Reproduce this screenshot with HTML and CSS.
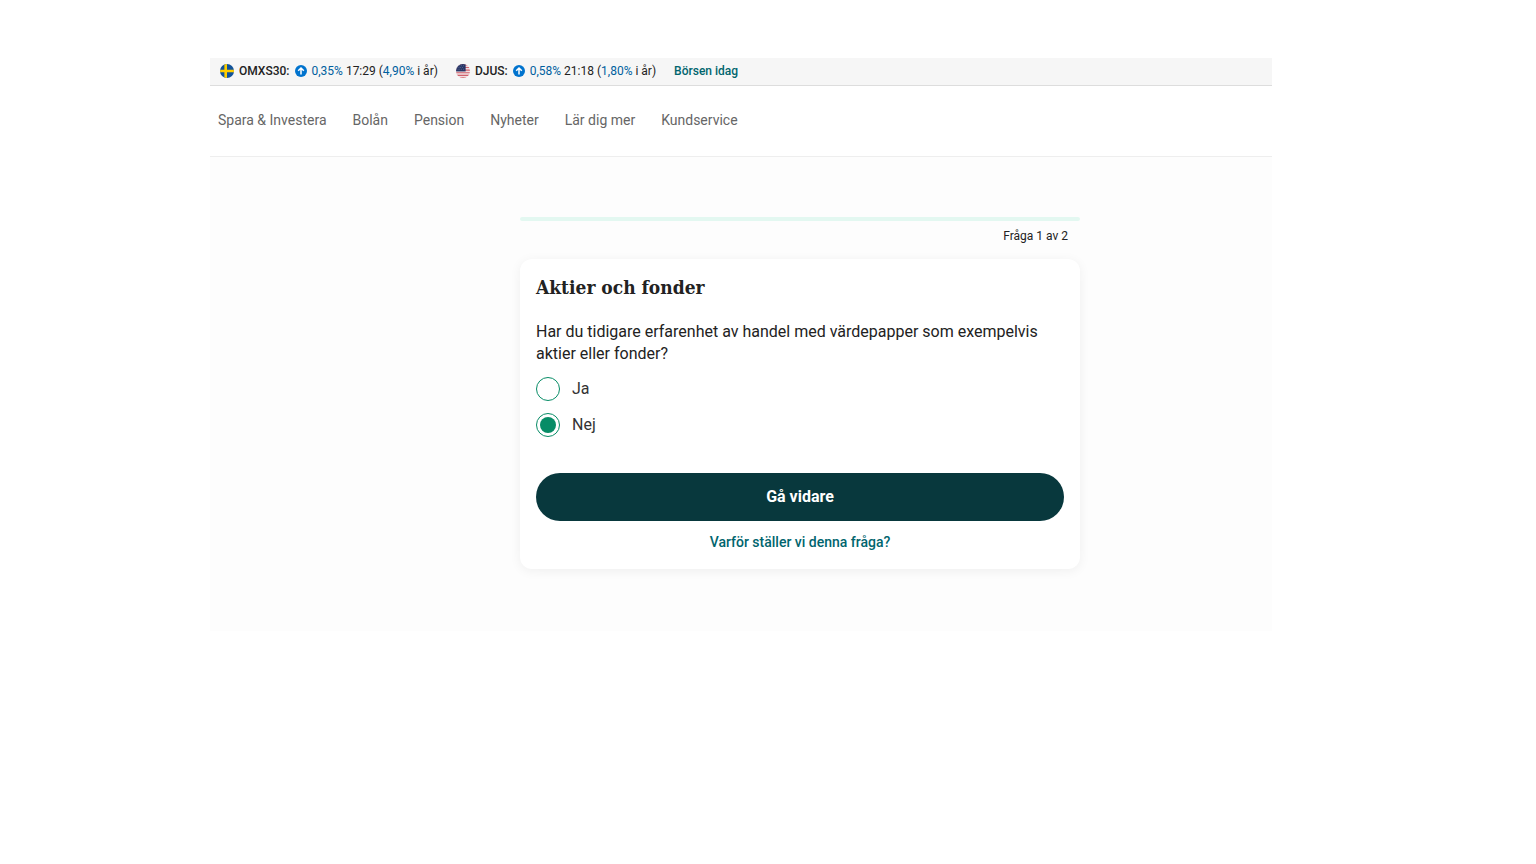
FILE: index.html
```html
<!DOCTYPE html>
<html lang="sv">
<head>
    <meta charset="UTF-8" />
    <meta name="viewport" content="width=device-width, initial-scale=1.0" />
    <title>Aktier och fonder</title>
    <link rel="stylesheet" href="styles.css">
</head>
<body>
    <div class="page">
        <div class="ticker">
            <div class="index">
                <svg class="flag" viewBox="0 0 16 16" aria-hidden="true">
                    <clipPath id="clipSe"><circle cx="8" cy="8" r="8" /></clipPath>
                    <g clip-path="url(#clipSe)">
                        <rect width="16" height="16" fill="#12539a" />
                        <path d="M0 8h16M6.5 0v16" stroke="#ffce00" stroke-width="3" />
                    </g>
                </svg>
                <b>OMXS30:</b>
                <svg class="arrow" viewBox="0 0 12 12" aria-hidden="true">
                    <circle cx="6" cy="6" r="6" fill="#0073ce" />
                    <path d="M6 9.5V3M3.2 5.8L6 3l2.8 2.8" fill="none" stroke="#fff" stroke-width="1.5" />
                </svg>
                <span><span class="up">0,35%</span> 17:29 (<span class="up">4,90%</span> i år)</span>
            </div>
            <div class="index">
                <svg class="flag" viewBox="0 0 16 16" aria-hidden="true">
                    <clipPath id="clipUs"><circle cx="8" cy="8" r="8" /></clipPath>
                    <g clip-path="url(#clipUs)">
                        <rect width="16" height="16" fill="#f1dfe1" />
                        <path d="M0 1h16M0 4h16M0 7h16M0 10h16M0 13h16M0 15.8h16" stroke="#d0616d" stroke-width="1.3" />
                        <rect width="11" height="8.5" fill="#263566" />
                        <path d="M2 2h8M1 4h8M2 6h8" stroke="#8b94b3" stroke-width=".7" stroke-dasharray=".8 1.2" />
                    </g>
                </svg>
                <b>DJUS:</b>
                <svg class="arrow" viewBox="0 0 12 12" aria-hidden="true">
                    <circle cx="6" cy="6" r="6" fill="#0073ce" />
                    <path d="M6 9.5V3M3.2 5.8L6 3l2.8 2.8" fill="none" stroke="#fff" stroke-width="1.5" />
                </svg>
                <span><span class="up">0,58%</span> 21:18 (<span class="up">1,80%</span> i år)</span>
            </div>
            <a class="market-link" href="#">Börsen idag</a>
        </div>

        <nav class="menu">
            <a href="#">Spara &amp; Investera</a>
            <a href="#">Bolån</a>
            <a href="#">Pension</a>
            <a href="#">Nyheter</a>
            <a href="#">Lär dig mer</a>
            <a href="#">Kundservice</a>
        </nav>

        <main>
            <div class="quiz">
                <div class="progress"></div>
                <p class="step">Fråga 1 av 2</p>

                <form class="card">
                    <h1>Aktier och fonder</h1>
                    <fieldset>
                        <legend>Har du tidigare erfarenhet av handel med värdepapper som exempelvis aktier eller fonder?</legend>
                        <label for="answerYes">
                            <input type="radio" id="answerYes" name="answer" value="ja" />
                            Ja
                        </label>
                        <label for="answerNo">
                            <input type="radio" id="answerNo" name="answer" value="nej" checked />
                            Nej
                        </label>
                    </fieldset>
                    <button type="button">Gå vidare</button>
                    <a class="why-link" href="#">Varför ställer vi denna fråga?</a>
                </form>
            </div>
        </main>
    </div>
</body>
</html>
```
FILE: styles.css
```css
* {
    box-sizing: border-box;
    margin: 0;
    padding: 0;
}
body {
    font-family: Roboto, sans-serif;
    background: #fff;
    color: #222;
}
a {
    text-decoration: none;
}
.page {
    max-width: 1062px;
    margin: 58px 264px 0 210px;
}

/* Index ticker */
.ticker {
    display: flex;
    align-items: center;
    gap: 18px;
    padding: 5px 10px 6px;
    background: #f6f6f6;
    border-bottom: 1px solid #ddd;
    font-size: 12px;
    line-height: 16px;
}
.index {
    display: flex;
    align-items: center;
    gap: 5px;
}
.index b,
.market-link {
    font-weight: 500;
}
.flag {
    width: 14px;
    height: 14px;
}
.arrow {
    width: 12px;
    height: 12px;
}
.up {
    color: #005f9e;
}
.market-link,
.why-link {
    color: #00656e;
}

/* Main menu */
.menu {
    display: flex;
    gap: 26px;
    padding: 26px 8px 28px;
    border-bottom: 1px solid #eee;
    font-size: 14px;
    line-height: 16px;
}
.menu a {
    color: #666;
}

/* Question */
main {
    padding: 60px 192px 62px 310px;
    background: #fdfdfd;
}
.quiz {
    max-width: 560px;
}
.progress {
    height: 4px;
    border-radius: 2px;
    background: #e3f8f1;
}
.step {
    padding: 7px 12px 15px;
    font-size: 12px;
    line-height: 16px;
    text-align: right;
}
.card {
    padding: 16px;
    background: #fff;
    border-radius: 12px;
    box-shadow: 0 2px 12px rgba(0, 0, 0, 0.06);
}
h1 {
    font-family: "Roboto Slab", "DejaVu Serif Condensed", "DejaVu Serif", serif;
    font-size: 19px;
    font-weight: 700;
    line-height: 24px;
    margin-bottom: 22px;
}
fieldset {
    border: none;
}
legend {
    margin-bottom: 12px;
    font-size: 16px;
    line-height: 22px;
}
label {
    display: flex;
    align-items: center;
    gap: 12px;
    margin-bottom: 12px;
    color: #333;
    font-size: 16px;
    line-height: 24px;
}
input[type="radio"] {
    appearance: none;
    width: 24px;
    height: 24px;
    border: 1px solid #078c66;
    border-radius: 50%;
    background: #fff;
}
input[type="radio"]:checked {
    padding: 3px;
    background: #078c66 content-box;
}
button {
    display: block;
    width: 100%;
    height: 48px;
    margin: 24px 0 12px;
    padding-bottom: 2px;
    border: none;
    border-radius: 24px;
    background: #08383d;
    color: #fff;
    font-family: inherit;
    font-size: 16px;
    font-weight: 700;
    cursor: pointer;
}
.why-link {
    display: block;
    padding-bottom: 2px;
    font-size: 14px;
    font-weight: 500;
    line-height: 18px;
    text-align: center;
}
```
